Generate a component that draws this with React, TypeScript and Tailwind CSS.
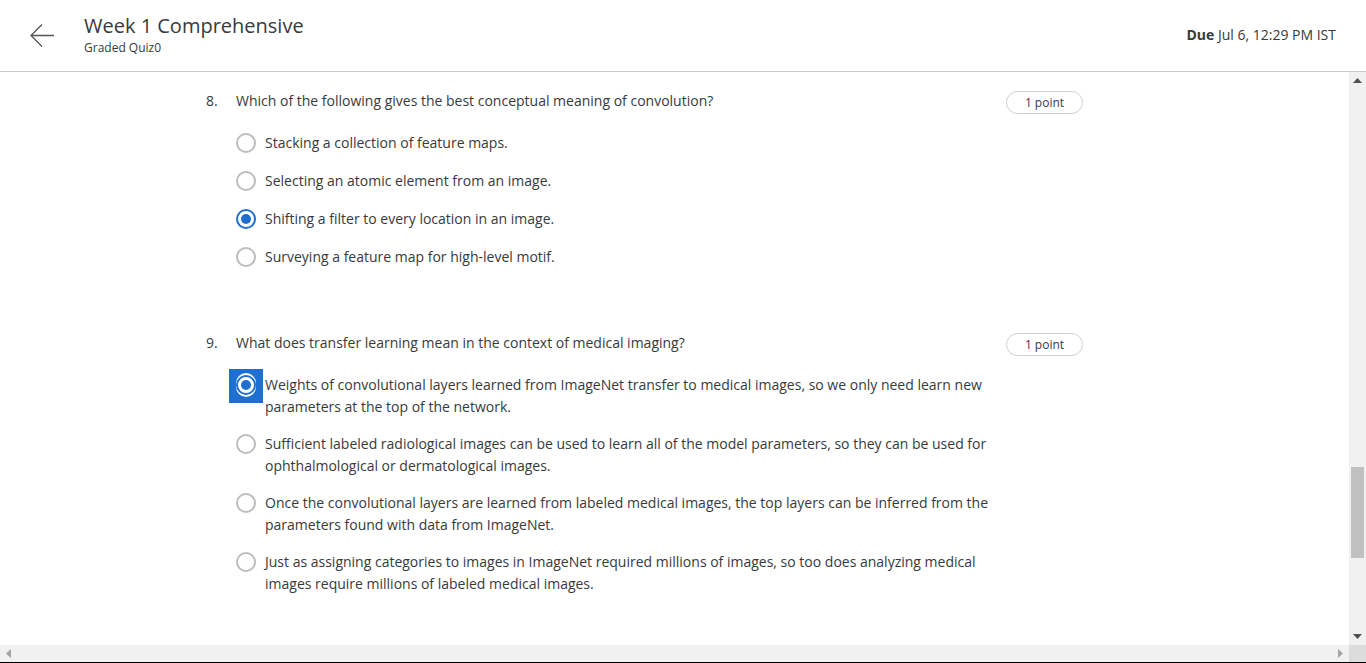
import React from "react";

const font = { fontFamily: '"Open Sans", "Noto Sans", sans-serif' };

function Radio({ checked, focused }: { checked?: boolean; focused?: boolean }) {
  const circle = (
    <div
      className={`w-5 h-5 rounded-full border-2 bg-white flex items-center justify-center ${
        checked ? "border-[#1f6fd0]" : "border-[#bdbdbd]"
      }`}
    >
      {checked && <div className="w-[10px] h-[10px] rounded-full bg-[#1f6fd0]" />}
    </div>
  );
  if (focused) {
    return (
      <div className="w-5 h-[22px] shrink-0 flex items-center justify-center relative">
        <div className="absolute -left-[7px] -top-[5px] w-[34px] h-[34px] bg-[#1f6fd0]" />
        <div className="relative w-6 h-6 rounded-full bg-white flex items-center justify-center">{circle}</div>
      </div>
    );
  }
  return <div className="w-5 h-[22px] shrink-0 flex items-center justify-center">{circle}</div>;
}

type Q = {
  n: number;
  text: string;
  options: { lines: string[]; checked?: boolean; focused?: boolean }[];
  gap: string;
  top: string;
};

function Question({ q }: { q: Q }) {
  return (
    <div>
      <div className="flex items-start">
        <div className="w-[30px] text-[14px] leading-[22px] text-[#373a3c]">{q.n}.</div>
        <div className="flex-1 text-[14px] leading-[22px] text-[#373a3c]">{q.text}</div>
        <div className="mt-px h-[23px] w-[77px] rounded-full border border-[#d0d0d0] flex items-center justify-center text-[12px] text-[#373a3c]">
          1 point
        </div>
      </div>
      <div className={`ml-[30px] flex flex-col ${q.gap} ${q.top}`}>
        {q.options.map((o, i) => (
          <div key={i} className="flex items-start">
            <Radio checked={o.checked} focused={o.focused} />
            <div className="ml-[9px] text-[14px] leading-[22px] text-[#373a3c]">
              {o.lines.map((l, j) => (
                <div key={j} className="whitespace-nowrap">
                  {l}
                </div>
              ))}
            </div>
          </div>
        ))}
      </div>
    </div>
  );
}

const questions: Q[] = [
  {
    n: 8,
    text: "Which of the following gives the best conceptual meaning of convolution?",
    gap: "gap-4",
    top: "mt-[18px]",
    options: [
      { lines: ["Stacking a collection of feature maps."] },
      { lines: ["Selecting an atomic element from an image."] },
      { lines: ["Shifting a filter to every location in an image."], checked: true },
      { lines: ["Surveying a feature map for high-level motif."] },
    ],
  },
  {
    n: 9,
    text: "What does transfer learning mean in the context of medical imaging?",
    gap: "gap-[15px]",
    top: "mt-[18px]",
    options: [
      {
        lines: [
          "Weights of convolutional layers learned from ImageNet transfer to medical images, so we only need learn new",
          "parameters at the top of the network.",
        ],
        checked: true,
        focused: true,
      },
      {
        lines: [
          "Sufficient labeled radiological images can be used to learn all of the model parameters, so they can be used for",
          "ophthalmological or dermatological images.",
        ],
      },
      {
        lines: [
          "Once the convolutional layers are learned from labeled medical images, the top layers can be inferred from the",
          "parameters found with data from ImageNet.",
        ],
      },
      {
        lines: [
          "Just as assigning categories to images in ImageNet required millions of images, so too does analyzing medical",
          "images require millions of labeled medical images.",
        ],
      },
    ],
  },
];

export default function App() {
  return (
    <div className="w-[1366px] h-[663px] bg-white flex flex-col overflow-hidden" style={font}>
      {/* Header */}
      <div className="h-[72px] shrink-0 border-b border-[#c8c8c8] flex items-start">
        <div className="w-[84px] h-full flex items-start">
          <svg className="ml-[29px] mt-[23px]" width="26" height="25" viewBox="0 0 26 25" fill="none">
            <path d="M25 12.5H2M13 1.5L2 12.5L13 23.5" stroke="#555" strokeWidth="1.3" />
          </svg>
        </div>
        <div className="flex-1 pt-[12px]">
          <div className="text-[20px] leading-[28px] text-[#373a3c]">Week 1 Comprehensive</div>
          <div className="text-[12px] leading-[15px] text-[#373a3c]">Graded Quiz0</div>
        </div>
        <div className="pr-[30px] pt-[24px] text-[14px] leading-[22px] text-[#373a3c]">
          <span className="font-bold">Due</span> Jul 6, 12:29 PM IST
        </div>
      </div>

      {/* Body */}
      <div className="flex-1 flex min-h-0">
        <div className="flex-1 pt-[18px]">
          <div className="ml-[206px] w-[877px] flex flex-col gap-[64px]">
            {questions.map((q) => (
              <Question key={q.n} q={q} />
            ))}
          </div>
        </div>
        {/* Vertical scrollbar */}
        <div className="w-[17px] bg-[#f1f1f1] flex flex-col items-center">
          <div className="h-[17px] flex items-center justify-center">
            <svg width="9" height="5" viewBox="0 0 9 5">
              <polygon points="0,5 4.5,0 9,5" fill="#505050" />
            </svg>
          </div>
          <div className="flex-1 w-full relative">
            <div className="absolute left-[2px] right-[2px] top-[378px] h-[91px] bg-[#c1c1c1]" />
          </div>
          <div className="h-[17px] flex items-center justify-center">
            <svg width="9" height="5" viewBox="0 0 9 5">
              <polygon points="0,0 9,0 4.5,5" fill="#505050" />
            </svg>
          </div>
        </div>
      </div>

      {/* Horizontal scrollbar */}
      <div className="h-[17px] shrink-0 flex bg-[#f1f1f1]">
        <div className="w-[17px] flex items-center justify-center">
          <svg width="5" height="9" viewBox="0 0 5 9">
            <polygon points="5,0 0,4.5 5,9" fill="#a3a3a3" />
          </svg>
        </div>
        <div className="flex-1" />
        <div className="w-[17px] flex items-center justify-center">
          <svg width="5" height="9" viewBox="0 0 5 9">
            <polygon points="0,0 5,4.5 0,9" fill="#a3a3a3" />
          </svg>
        </div>
        <div className="w-[17px] bg-[#dcdcdc]" />
      </div>
      <div className="h-px shrink-0 bg-black" />
    </div>
  );
}
